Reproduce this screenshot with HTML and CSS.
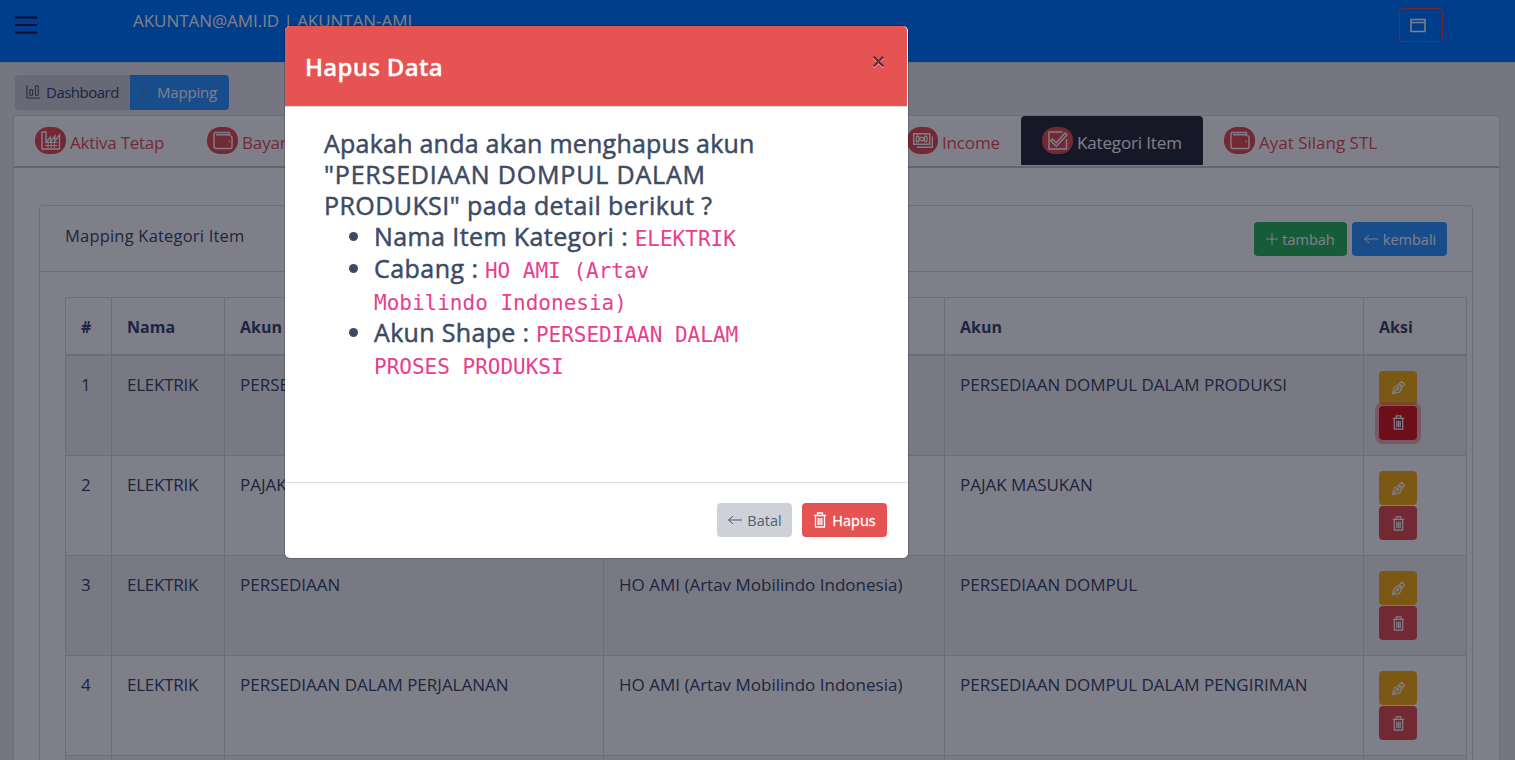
FILE: index.html
```html
<!DOCTYPE html>
<html lang="id">
<head>
<meta charset="utf-8">
<title>Mapping Kategori Item</title>
<link rel="stylesheet" href="styles.css">
</head>
<body>
<svg class="defs" width="0" height="0">
  <symbol id="wallet" viewBox="0 0 20 19"><path d="M1 3v12.500q0 2 2 2h14.500q1.500 0 1.500-1.500V6.500Q19 5 17.500 5M1 3q0-1.500 1.500-1.500h14V5M3 3.800h13.500"/><path d="M15.500 10.500h1.200"/></symbol>
  <symbol id="factory" viewBox="0 0 20 19"><path d="M1 18V1h4v10l4.500-5v5L14 5v5l4.500-6v14z"/><path d="M4 11.500h12.500M4 14.500h12.500M7 9.500V17M10.200 10v7M13.400 10v7" stroke-width="1"/></symbol>
  <symbol id="money" viewBox="0 0 20 19"><path d="M.7 2.700h16v10.600H.7zM4 16.200h15.300V5.500M3.500 5.500v5M6 5.500v5M11.500 5.500v5M14 5.500v5M3 5.200h3M11.500 5.200H14M3 10.700h3M11.500 10.700H14"/><circle cx="8.700" cy="8" r="1.900"/></symbol>
  <symbol id="check" viewBox="0 0 20 19"><path d="M14.500 1H1v17h17.500V8"/><path d="m4.500 8 3.700 3.700L17 2l2 2L8.200 15.200 2.700 9.800z"/></symbol>
  <symbol id="trash" viewBox="0 0 14 16"><path d="M1 3.500h12M4.500 3V1h5v2M2.500 4v11h9V4M5.200 6v7M7 6v7M8.800 6v7"/></symbol>
  <symbol id="pen" viewBox="0 0 16 16"><path d="m1.500 14.500 2-7 4-2.500 4 4-2.500 4zM2 14l4-4M9 4l2.500-2.500 3 3L12 7z"/><circle cx="7" cy="9" r="1.200"/></symbol>
  <symbol id="back" viewBox="0 0 16 12"><path d="M15 6H1.500M6 2 1.500 6 6 10"/></symbol>
</svg>

<header class="topbar">
  <svg class="menu" viewBox="0 0 22 18"><path d="M0 1.500h22M0 9h22M0 16.500h22"/></svg>
  <span class="account">AKUNTAN@AMI.ID | AKUNTAN-AMI</span>
  <button class="window"><svg class="ico" viewBox="0 0 16 15"><path d="M1 1.500h14v12H1zM1 4.500h14"/></svg></button>
</header>

<nav class="crumbs">
  <a class="crumb home"><svg class="ico" viewBox="0 0 16 16"><path d="M1 1v14h14M4 6h3v6H4zM10 2h3v10h-3z"/></svg><span>Dashboard</span></a>
  <a class="crumb here"><i>/</i><span>Mapping</span></a>
</nav>

<main class="panel">
  <div class="tabs">
    <a class="tab aktiva"><b><svg><use href="#factory"/></svg></b><span>Aktiva Tetap</span></a>
    <a class="tab bayar"><b><svg><use href="#wallet"/></svg></b><span>Bayar</span></a>
    <a class="tab income"><b><svg><use href="#money"/></svg></b><span>Income</span></a>
    <a class="tab kategori active"><b><svg><use href="#check"/></svg></b><span>Kategori Item</span></a>
    <a class="tab ayat"><b><svg><use href="#wallet"/></svg></b><span>Ayat Silang STL</span></a>
  </div>
  <section class="card">
    <div class="card-head">
      <span class="card-title">Mapping Kategori Item</span>
      <div class="actions">
        <button class="btn green"><svg class="ico plus" viewBox="0 0 12 12"><path d="M0 6h12M6 0v12"/></svg><span>tambah</span></button>
        <button class="btn blue"><svg class="ico arrow"><use href="#back"/></svg><span>kembali</span></button>
      </div>
    </div>
    <table class="grid">
      <colgroup><col class="c1"><col class="c2"><col class="c3"><col class="c4"><col class="c5"><col class="c6"></colgroup>
      <thead><tr><th>#</th><th>Nama</th><th>Akun</th><th>Cabang</th><th>Akun</th><th>Aksi</th></tr></thead>
      <tbody>
        <tr class="first"><td>1</td><td>ELEKTRIK</td><td>PERSEDIAAN</td><td></td><td>PERSEDIAAN DOMPUL DALAM PRODUKSI</td><td><button class="act edit"><svg><use href="#pen"/></svg></button><button class="act del focus"><svg><use href="#trash"/></svg></button></td></tr>
        <tr><td>2</td><td>ELEKTRIK</td><td>PAJAK</td><td></td><td>PAJAK MASUKAN</td><td><button class="act edit"><svg><use href="#pen"/></svg></button><button class="act del"><svg><use href="#trash"/></svg></button></td></tr>
        <tr><td>3</td><td>ELEKTRIK</td><td>PERSEDIAAN</td><td>HO AMI (Artav Mobilindo Indonesia)</td><td>PERSEDIAAN DOMPUL</td><td><button class="act edit"><svg><use href="#pen"/></svg></button><button class="act del"><svg><use href="#trash"/></svg></button></td></tr>
        <tr><td>4</td><td>ELEKTRIK</td><td>PERSEDIAAN DALAM PERJALANAN</td><td>HO AMI (Artav Mobilindo Indonesia)</td><td>PERSEDIAAN DOMPUL DALAM PENGIRIMAN</td><td><button class="act edit"><svg><use href="#pen"/></svg></button><button class="act del"><svg><use href="#trash"/></svg></button></td></tr>
        <tr><td></td><td></td><td></td><td></td><td></td><td></td></tr>
      </tbody>
    </table>
  </section>
</main>

<div class="backdrop">
  <div class="modal">
    <div class="modal-head"><h4>Hapus Data</h4><svg class="close" viewBox="0 0 12 12"><path class="glow" d="m1.500 2.500 9 9m0-9-9 9"/><path d="m1.500 1.500 9 9m0-9-9 9"/></svg></div>
    <div class="modal-body">
      <div class="q q1">Apakah anda akan menghapus akun</div>
      <div class="q q2">"PERSEDIAAN DOMPUL DALAM</div>
      <div class="q q3">PRODUKSI" pada detail berikut ?</div>
      <ul>
        <li><span class="k1">Nama Item Kategori :</span> <code>ELEKTRIK</code></li>
        <li><span class="k2">Cabang :</span> <code>HO AMI (Artav<br>Mobilindo Indonesia)</code></li>
        <li><span class="k3">Akun Shape :</span> <code>PERSEDIAAN DALAM<br>PROSES PRODUKSI</code></li>
      </ul>
    </div>
    <div class="modal-foot">
      <button class="btn cancel"><svg class="ico arrow"><use href="#back"/></svg><span>Batal</span></button>
      <button class="btn red"><svg class="ico bin"><use href="#trash"/></svg><span>Hapus</span></button>
    </div>
  </div>
</div>
</body>
</html>
```
FILE: styles.css
```css
* { box-sizing: border-box; }
html { overflow: hidden; }
body { margin: 0; height: 760px; overflow: hidden; display: flex; flex-direction: column; background: #ebedef; color: #3c4b64; font: 16.500px/26px "Open Sans", "Noto Sans", sans-serif; }
svg { fill: none; stroke: currentColor; }
.defs { position: absolute; }
button { font: inherit; border: 0; padding: 0; }
span, h4, .q { white-space: nowrap; }

.topbar { flex: none; display: flex; align-items: flex-start; height: 63px; padding: 8px 72px 0 15px; background: #007bff; border-bottom: 1px solid #d8dbe0; color: #fff; }
.menu { width: 22px; height: 18px; margin-top: 8px; stroke: #00184a; stroke-width: 2; }
.account { margin-left: 96px; font-size: 17px; line-height: 25px; letter-spacing: -.05px; }
.window { width: 44px; height: 34px; margin-left: auto; border: 1px solid #e55353; border-radius: 4px; background: none; color: #fff; display: flex; align-items: center; padding-left: 10px; }
.window .ico { width: 16px; height: 15px; stroke-width: 1.500; }

.crumbs { flex: none; display: flex; height: 35px; margin: 12px 0 0 15px; font-size: 15px; }
.crumb { display: flex; align-items: center; }
.crumb span, .crumb i { margin-top: -2px; }
.home { width: 115px; padding-left: 11px; gap: 5px; background: #ced2d8; border-radius: 4px 0 0 4px; }
.home .ico { width: 15px; height: 15px; margin-top: -2px; }
.home span { letter-spacing: -.5px; }
.here { width: 99px; padding-left: 11px; background: #39f; border-radius: 0 4px 4px 0; color: #fff; }
.here i { width: 16px; font-style: normal; color: #768192; }
.here span { letter-spacing: -.2px; }

.panel { flex: 1; min-height: 0; display: flex; flex-direction: column; margin: 5px 15px 0 13px; background: #fff; border: 1px solid #d8dbe0; border-bottom: 0; border-radius: 4px 4px 0 0; }
.tabs { flex: none; display: flex; height: 52px; border-bottom: 2px solid #c4c9d0; }
.tab { display: flex; height: 49px; padding-left: 21px; gap: 4px; color: #e55353; font-size: 17px; }
.tab b { width: 31px; height: 27px; margin-top: 11px; border-radius: 13px; background: #e55353; color: #fff; display: flex; align-items: center; justify-content: center; }
.tab b svg { width: 20px; height: 19px; stroke-width: 1.400; }
.tab span { margin-top: 14px; letter-spacing: -.15px; }
.aktiva { width: 172px; }
.aktiva span { letter-spacing: -.25px; }
.bayar { width: 700px; }
.income { width: 135px; }
.kategori { width: 182px; }
.ayat span { letter-spacing: 0; }
.active { background: #2f3038; color: #fff; border-radius: 4px 4px 0 0; }

.card { flex: 1; min-height: 0; overflow: hidden; margin: 37px 26px 0 25px; border: 1px solid #d8dbe0; border-bottom: 0; border-radius: 4px 4px 0 0; }
.card-head { display: flex; justify-content: space-between; height: 66px; padding: 16px 25px 0; border-bottom: 1px solid #d8dbe0; }
.card-title { line-height: 28px; font-size: 16.500px; letter-spacing: .2px; }
.actions { display: flex; gap: 5px; }
.btn { display: flex; align-items: center; justify-content: center; height: 34px; gap: 6px; border-radius: 4px; color: #fff; font-size: 14.500px; }
.btn span { margin-top: 1px; }
.green { width: 93px; background: #2eb85c; gap: 4px; }
.blue { width: 95px; background: #39f; gap: 4px; }
.ico { flex: none; }
.plus { width: 12px; height: 12px; }
.arrow { width: 16px; height: 12px; }

.grid { width: 1402px; margin: 25px 0 0 25px; table-layout: fixed; border-collapse: collapse; font-size: 17px; }
.c1 { width: 46px; } .c2 { width: 113px; } .c3 { width: 379px; } .c4 { width: 341px; } .c5 { width: 419px; } .c6 { width: 103px; }
th, td { border: 1px solid #d8dbe0; text-align: left; vertical-align: top; padding: 16px 15px 0; white-space: nowrap; line-height: 26px; }
th { height: 57px; border-bottom-width: 2px; font-size: 16px; font-weight: 700; }
td { height: 100px; }
td:nth-child(2) { letter-spacing: -.25px; }
td:last-child { padding-top: 15px; }
.first td { height: 101px; }
tbody tr:nth-child(odd) { background: #f2f2f3; }
.act { display: flex; align-items: center; justify-content: center; width: 38px; height: 34px; border-radius: 4px; color: #fff; }
.act + .act { margin-top: 1px; }
.act svg { width: 15px; height: 15px; stroke-width: 1.300; }
.edit { background: #f9b115; }
.del { background: #e55353; }
.focus { background: #d81f1f; box-shadow: 0 0 0 4px rgba(233, 109, 109, .5); }

.backdrop { position: absolute; inset: 0; background: rgba(0, 0, 21, .5); }
.modal { width: 623px; height: 532px; margin: 26px 0 0 285px; display: flex; flex-direction: column; background: #fff; border-right: 1px solid #fff; border-radius: 5px; box-shadow: 0 0 0 1px rgba(0, 0, 21, .18); overflow: hidden; }
.modal-head { display: flex; justify-content: space-between; height: 81px; padding: 0 22px 0 20px; background: #e55353; border-bottom: 1px solid #d8dbe0; color: #fff; }
h4 { margin: 0; font-size: 24px; line-height: 81px; font-weight: 600; letter-spacing: .3px; -webkit-text-stroke: .3px currentColor; }
.close { width: 13px; height: 13px; margin-top: 29px; stroke: #692c3a; stroke-width: 2; }
.glow { stroke: #f5b0b0; }
.modal-body { flex: 1; padding: 21px 39px 0; font-size: 25px; line-height: 31px; -webkit-text-stroke: .5px currentColor; }
.q1 { letter-spacing: .23px; }
.q2 { letter-spacing: .82px; }
.q3 { letter-spacing: .42px; }
.k1 { letter-spacing: .4px; }
.k2 { letter-spacing: .45px; }
.k3 { letter-spacing: .33px; }
ul { margin: -1px 0 0; padding: 0 0 0 50px; line-height: 32px; }
code { font-family: "DejaVu Sans Mono", monospace; font-size: 21px; color: #e83e8c; line-height: 16px; -webkit-text-stroke: 0; }
.modal-foot { display: flex; gap: 10px; justify-content: flex-end; height: 76px; padding: 20px 20px 0; border-top: 1px solid #d8dbe0; }
.cancel { width: 75px; background: #ced2d8; color: #4f5d73; gap: 4px; }
.red { width: 85px; background: #e55353; gap: 5px; -webkit-text-stroke: .3px currentColor; }
.bin { width: 14px; height: 16px; stroke-width: 1.300; }
```
